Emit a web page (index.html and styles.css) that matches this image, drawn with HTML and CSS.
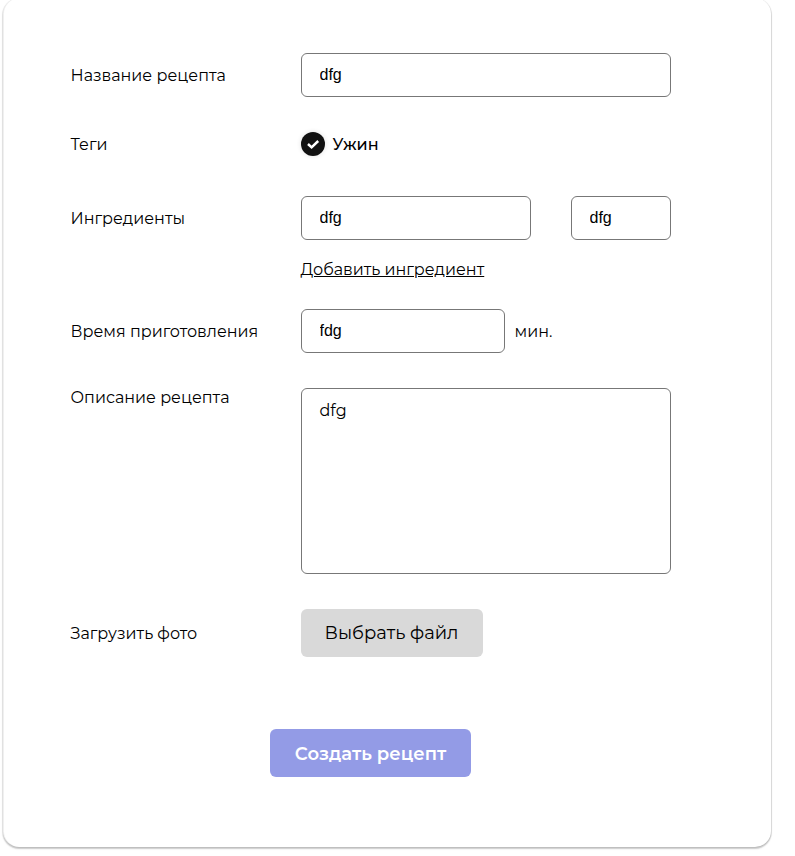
FILE: index.html
```html
<!DOCTYPE html>
<html lang="ru">
<head>
<meta charset="utf-8">
<title>Создание рецепта</title>
<link rel="stylesheet" href="styles.css">
</head>
<body>
<form class="card">
  <div class="row"><label class="label" for="name">Название рецепта</label><input id="name" class="input wide" value="dfg"></div>
  <div class="row row-tags"><span class="label">Теги</span>
    <div class="tag"><svg class="check" viewBox="0 0 24 24"><path d="M7 12l3.6 3.3L17.2 9" fill="none" stroke="#fff" stroke-width="2.5"/></svg><span class="tag-name">Ужин</span></div></div>
  <div class="row row-ingredients"><span class="label">Ингредиенты</span><input class="input ingredient" value="dfg"><input class="input amount" value="dfg"></div>
  <div class="row row-add"><a class="add">Добавить ингредиент</a></div>
  <div class="row row-time"><label class="label" for="time">Время приготовления</label><input id="time" class="input time" value="fdg"><span class="unit">мин.</span></div>
  <div class="row row-desc"><label class="label label-top" for="desc">Описание рецепта</label><textarea id="desc" class="area">dfg</textarea></div>
  <div class="row row-file"><span class="label">Загрузить фото</span><button type="button" class="file">Выбрать файл</button></div>
  <button type="button" class="submit">Создать рецепт</button>
</form>
</body>
</html>
```

FILE: styles.css
```css
* { box-sizing: border-box; }
body { margin: 0; height: 856px; overflow: hidden; background: #fff; color: #000; font: 16px/20px Montserrat, "Open Sans", sans-serif; }
button { border: 0; text-align: left; white-space: nowrap; font-family: inherit; }
.card { width: 768px; height: 849px; margin: -2px 0 0 3px; padding: 55px 0 0 67.5px; border-radius: 16px; background: #fff; box-shadow: 0 1px 0 1px rgba(0,0,0,.05), 0 1px 2px rgba(0,0,0,.14), 0 2px 2px rgba(0,0,0,.12), 1px 0 1px rgba(0,0,0,.04), inset 1px 0 0 rgba(0,0,0,.06); }
.row { display: flex; align-items: center; }
.label { width: 230px; flex: none; padding-top: 2px; }
.label-top { padding-top: 0; }
.input { height: 44px; padding: 0 18px; border: 1px solid #777; border-radius: 6px; background: #fff; color: #000; font: 16px/42px "Liberation Sans", sans-serif; }
.wide { width: 370px; }
.row-tags { height: 24px; margin-top: 35px; }
.tag { display: flex; align-items: center; gap: 8px; font-weight: 500; }
.tag-name { padding-top: 2px; }
.check { width: 24px; height: 24px; border-radius: 50%; background: #111; box-shadow: 0 0 5px rgba(0,0,0,.12); }
.row-ingredients { margin-top: 40px; }
.ingredient { width: 230px; }
.amount { width: 100px; margin-left: 40px; }
.row-add { margin-top: 20px; padding-left: 230px; }
.add { text-decoration: underline; }
.row-time { margin-top: 29px; }
.time { width: 204px; }
.unit { margin-left: 10px; padding-top: 2px; }
.row-desc { margin-top: 35px; align-items: flex-start; }
.area { width: 370px; height: 186px; margin: 0; padding: 12px 18px; border: 1px solid #777; border-radius: 6px; resize: none; background: #fff; color: #000; font: inherit; }
.row-file { margin-top: 35px; }
.file { width: 182px; height: 48px; padding: 0 0 0 24px; border-radius: 6px; background: #d9d9d9; color: #000; font-size: 18px; line-height: 48px; }
.submit { display: block; width: 201px; height: 48px; margin: 72px 0 0 199px; padding: 2px 0 0 25.3px; border-radius: 6px; background: #939be6; color: #fff; font-size: 18px; font-weight: 600; line-height: 46px; }
```
